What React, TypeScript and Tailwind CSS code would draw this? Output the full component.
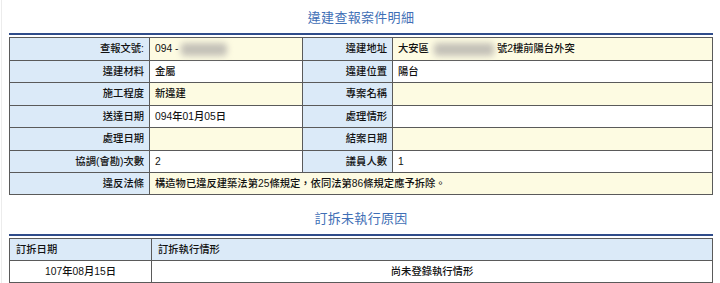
import React from "react";

const font = "font-['Liberation_Sans','Noto_Sans_CJK_TC',sans-serif]";

const Blur = ({ w }: { w: number }) => (
  <span
    className="inline-block h-[13px] align-middle bg-[#c4c1b8] blur-[3px] rounded-sm"
    style={{ width: w }}
  />
);

const cell = "border border-[#5a5a5a] py-0 whitespace-nowrap";

const Label = ({ children }: { children?: React.ReactNode }) => (
  <td className={`${cell} bg-[#dbeaf8] px-[5px] text-right`}>{children}</td>
);

const Value = ({
  children,
  yellow,
  span,
}: {
  children?: React.ReactNode;
  yellow?: boolean;
  span?: number;
}) => (
  <td
    colSpan={span}
    className={`${cell} px-[5px] text-left ${yellow ? "bg-[#fdfbe2]" : "bg-white"}`}
  >
    {children}
  </td>
);

const Title = ({ children }: { children: React.ReactNode }) => (
  <div>
    <h2 className="h-5 text-center text-[13px] leading-5 tracking-[0.3px] font-normal text-[#3f6fb6]">
      {children}
    </h2>
    <div className="mt-[5px] h-[2px] bg-[#2f4c8a]" />
  </div>
);

const App: React.FC = () => {
  return (
    <div className={`min-h-screen bg-white ml-px border-l border-[#ececec] ${font}`}>
      <div className="px-[7px] pt-2 text-[10.3px] font-medium text-[#111]">
        <Title>違建查報案件明細</Title>
        <table className="mt-[2px] w-full border-collapse table-fixed border border-[#5a5a5a]">
          <colgroup>
            <col className="w-[140px]" />
            <col className="w-[153px]" />
            <col className="w-[90px]" />
            <col />
          </colgroup>
          <tbody>
            <tr className="h-[23px]">
              <Label>查報文號:</Label>
              <Value yellow>
                094 - <Blur w={46} />
              </Value>
              <Label>違建地址</Label>
              <Value yellow>
                大安區<span className="ml-[5px]" />
                <Blur w={60} />
                <span className="ml-[3px]">號2樓前陽台外突</span>
              </Value>
            </tr>
            <tr className="h-[22px]">
              <Label>違建材料</Label>
              <Value>金屬</Value>
              <Label>違建位置</Label>
              <Value>陽台</Value>
            </tr>
            <tr className="h-[23px]">
              <Label>施工程度</Label>
              <Value yellow>新違建</Value>
              <Label>專案名稱</Label>
              <Value yellow />
            </tr>
            <tr className="h-[22px]">
              <Label>送達日期</Label>
              <Value>094年01月05日</Value>
              <Label>處理情形</Label>
              <Value />
            </tr>
            <tr className="h-[23px]">
              <Label>處理日期</Label>
              <Value yellow />
              <Label>結案日期</Label>
              <Value yellow />
            </tr>
            <tr className="h-[22px]">
              <Label>協調(會勘)次數</Label>
              <Value>2</Value>
              <Label>議員人數</Label>
              <Value>1</Value>
            </tr>
            <tr className="h-[22px]">
              <Label>違反法條</Label>
              <Value yellow span={3}>
                構造物已違反建築法第25條規定，依同法第86條規定應予拆除。
              </Value>
            </tr>
          </tbody>
        </table>

        <div className="mt-[14px]">
          <Title>訂拆未執行原因</Title>
        </div>
        <table className="mt-[2px] w-full border-collapse table-fixed border border-[#5a5a5a]">
          <colgroup>
            <col className="w-[142px]" />
            <col />
          </colgroup>
          <tbody>
            <tr className="h-[22px] bg-[#dbeaf8]">
              <td className={`${cell} px-[6px] text-left`}>訂拆日期</td>
              <td className={`${cell} px-[6px] text-left`}>訂拆執行情形</td>
            </tr>
            <tr className="h-[22px] bg-white">
              <td className={`${cell} px-[6px] text-center`}>107年08月15日</td>
              <td className={`${cell} px-[6px] text-center`}>尚未登錄執行情形</td>
            </tr>
          </tbody>
        </table>
      </div>
    </div>
  );
};

export default App;
